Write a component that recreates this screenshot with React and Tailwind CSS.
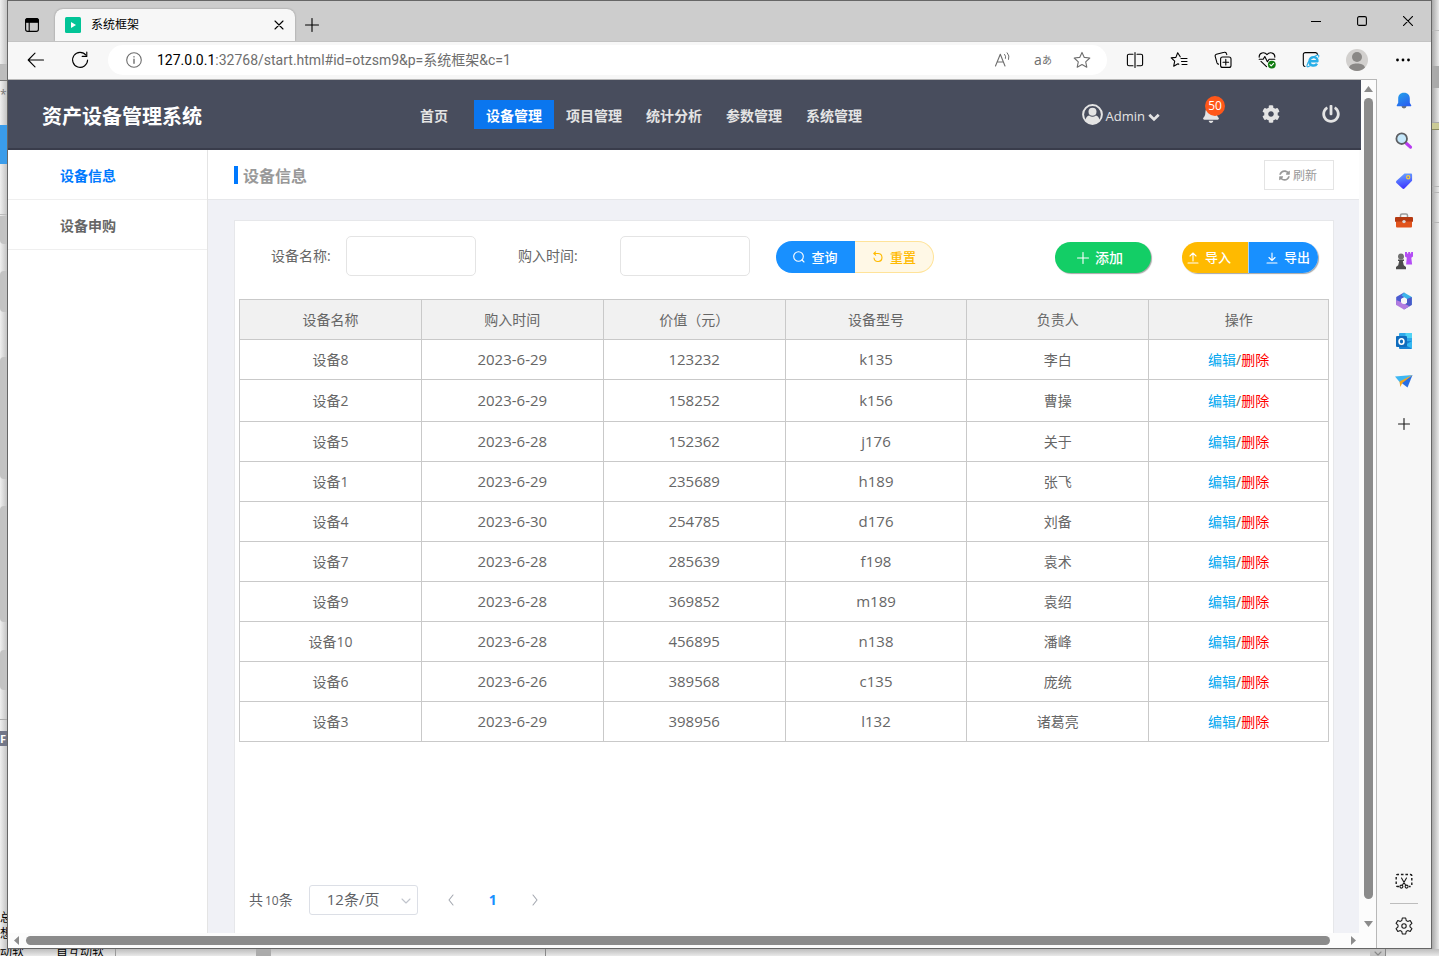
import React from "react";
import { FaBell, FaCog, FaPowerOff, FaSyncAlt } from "react-icons/fa";

const devices = [
  ["设备8", "2023-6-29", "123232", "k135", "李白"],
  ["设备2", "2023-6-29", "158252", "k156", "曹操"],
  ["设备5", "2023-6-28", "152362", "j176", "关于"],
  ["设备1", "2023-6-29", "235689", "h189", "张飞"],
  ["设备4", "2023-6-30", "254785", "d176", "刘备"],
  ["设备7", "2023-6-28", "285639", "f198", "袁术"],
  ["设备9", "2023-6-28", "369852", "m189", "袁绍"],
  ["设备10", "2023-6-28", "456895", "n138", "潘峰"],
  ["设备6", "2023-6-26", "389568", "c135", "庞统"],
  ["设备3", "2023-6-29", "398956", "l132", "诸葛亮"],
];

const columns = ["设备名称", "购入时间", "价值（元）", "设备型号", "负责人"];

function Svg({ size = 20, children, className = "" }) {
  return (
    <svg
      width={size}
      height={size}
      viewBox={`0 0 ${size} ${size}`}
      fill="none"
      stroke="currentColor"
      strokeWidth="1.1"
      strokeLinecap="round"
      strokeLinejoin="round"
      className={`shrink-0 ${className}`}
      aria-hidden="true"
    >
      {children}
    </svg>
  );
}

function IconButton({ label, className = "", children }) {
  return (
    <button type="button" aria-label={label} className={`flex shrink-0 items-center justify-center ${className}`}>
      {children}
    </button>
  );
}

function TabStrip() {
  return (
    <div className="flex h-10 bg-[#cdcdcd] text-black">
      <IconButton label="标签页操作" className="w-[47px] pt-2">
        <Svg size={16}>
          <rect x="1.6" y="1.6" width="12.8" height="12.8" rx="2.2" />
          <path d="M1.6 3.8A2.2 2.2 0 0 1 3.8 1.6h8.4a2.2 2.2 0 0 1 2.2 2.2v1.4H1.6z" fill="currentColor" />
          <path d="M5.2 5v9.4" />
        </Svg>
      </IconButton>
      <div className="mt-2 flex w-60 items-center rounded-t-lg bg-[#f7f7f7] pl-2.5 pr-2 shadow-[0_0_2px_rgba(0,0,0,0.35)]">
        <svg width="16" height="16" viewBox="0 0 16 16" className="shrink-0" aria-hidden="true">
          <rect width="16" height="16" rx="1.5" fill="#02c497" />
          <path d="M6 5l5 3-5 3z" fill="#fff" />
        </svg>
        <span className="ml-2.5 flex-1 text-xs">系统框架</span>
        <IconButton label="关闭标签页" className="size-4">
          <Svg size={10}><path d="M1 1l8 8M9 1l-8 8" /></Svg>
        </IconButton>
      </div>
      <IconButton label="新建标签页" className="w-[34px] pt-2">
        <Svg size={14}><path d="M7 .5v13M.5 7h13" /></Svg>
      </IconButton>
      <div className="flex-1" />
      <IconButton label="最小化" className="w-[46px]">
        <Svg size={10}><path d="M0 5.5h10" /></Svg>
      </IconButton>
      <IconButton label="最大化" className="w-[46px]">
        <Svg size={10}><rect x=".6" y=".6" width="8.8" height="8.8" rx="1.5" /></Svg>
      </IconButton>
      <IconButton label="关闭" className="w-[46px]">
        <Svg size={10}><path d="M0 0l10 10M10 0L0 10" /></Svg>
      </IconButton>
    </div>
  );
}

function AddressBar() {
  return (
    <div className="flex h-[38px] items-center border-t border-[#c3c3c3] bg-[#f7f7f7] pb-0.5 text-black">
      <IconButton label="后退" className="ml-1.5 w-11">
        <Svg size={18}><path d="M16.5 9H1.5M8 2.2L1.2 9 8 15.8" /></Svg>
      </IconButton>
      <IconButton label="刷新页面" className="w-11">
        <Svg size={18}>
          <path d="M15 4.2A7.5 7.5 0 1 0 16.6 9" />
          <path d="M15.8 1v4.4h-4.6" />
        </Svg>
      </IconButton>
      <div className="ml-1.5 flex h-[30px] flex-1 items-center rounded-full bg-white pl-[18px] pr-2 text-[#6e6e6e]">
        <Svg size={16}>
          <circle cx="8" cy="8" r="7.3" />
          <path d="M8 7.2v4M8 4.8v.1" strokeWidth="1.4" />
        </Svg>
        <input
          aria-label="地址栏"
          readOnly
          value="127.0.0.1:32768/start.html#id=otzsm9&p=系统框架&c=1"
          className="sr-only"
        />
        <span className="ml-[15px] flex-1 font-['Roboto','Noto_Sans_CJK_SC',sans-serif] text-sm" aria-hidden="true">
          <span className="text-black">127.0.0.1</span>:32768/start.html#id=otzsm9&amp;p=系统框架&amp;c=1
        </span>
        <div className="flex items-center">
          <IconButton label="大声朗读" className="w-10">
            <Svg size={18}>
              <path d="M1.5 15L6.3 3.2 11 15M3.2 11h6.2" />
              <path d="M10.6 3.4q1.6 1.7.9 4M13.2 1.8q2.8 3 1.4 6.6" strokeWidth="1" />
            </Svg>
          </IconButton>
          <IconButton label="翻译" className="w-10 items-baseline text-sm leading-5">
            a<span className="text-[10px]">あ</span>
          </IconButton>
          <IconButton label="收藏此页" className="ml-0.5 w-[34px]">
            <Svg size={18}>
              <path d="M9 1.4l2.3 5 5.5.6-4.1 3.8 1.1 5.4L9 13.5l-4.8 2.7 1.1-5.4L1.2 7l5.5-.6z" />
            </Svg>
          </IconButton>
        </div>
      </div>
      <div className="flex pl-1.5">
        <IconButton label="拆分屏幕" className="w-11">
          <Svg size={18}>
            <path d="M7 3.2H3a1.6 1.6 0 0 0-1.6 1.6v8.4A1.6 1.6 0 0 0 3 14.800h4M11 3.2h4a1.600 1.600 0 0 1 1.600 1.600v8.400a1.600 1.600 0 0 1-1.600 1.600h-4M9 1.500v15" />
          </Svg>
        </IconButton>
        <IconButton label="收藏夹" className="w-11">
          <Svg size={18}>
            <path d="M10.200 5.800L7.700 1.800 5.900 6.400l-4.700.5 3.500 3.300-1 5L8 12.800l.8.5M11 7.500h6M11.500 10.500h5.500M12 13.500h5" />
          </Svg>
        </IconButton>
        <IconButton label="集锦" className="w-11">
          <Svg size={18}>
            <path d="M12.800 3.600L12.400 2.500A1.700 1.700 0 0 0 10.300 1.300L2.400 3.200A1.700 1.700 0 0 0 1.200 5.300l1.800 6.600a1.700 1.700 0 0 0 1.500 1.200" />
            <rect x="6.600" y="6" width="10.400" height="10.400" rx="2" />
            <path d="M11.800 8.400v5.600M9 11.200h5.600" />
          </Svg>
        </IconButton>
        <IconButton label="浏览器概要" className="w-11">
          <Svg size={18}>
            <path d="M1.200 6.200C.8 1.500 6.500.4 9 3.600c2.500-3.200 8.200-2.100 7.800 2.600M1.200 8.300h4L6.800 5.500l2.600 5.300 1.700-2.500h5.700M3 10.300l5.500 5.400" />
            <circle cx="13.800" cy="13.600" r="3.900" fill="#107c10" stroke="none" />
            <path d="M12 13.700l1.200 1.200 2.400-2.600" stroke="#fff" />
          </Svg>
        </IconButton>
        <IconButton label="IE 模式" className="w-11">
          <Svg size={18}>
            <path d="M15.500 3.500A2 2 0 0 0 13.600 1.600H3.300a2 2 0 0 0-2 2v9.900a2 2 0 0 0 1.700 2" />
            <path d="M15 12.600c-1.600 3-7.500 2.700-7.500-2.200 0-5.600 8.300-5.700 8-.2H8" stroke="#28aee8" strokeWidth="2.400" strokeLinecap="butt" />
            <path d="M8 14.800c-5 3.500-3.300-2.700.8-6.600 4-3.800 9.300-6 7.800-2.200" stroke="#28aee8" />
          </Svg>
        </IconButton>
        <IconButton label="个人资料" className="w-12">
          <svg width="22" height="22" viewBox="0 0 22 22" aria-hidden="true">
            <circle cx="11" cy="11" r="11" fill="#d2d0ce" />
            <circle cx="11" cy="8" r="5" fill="#8a8886" />
            <path d="M3 18.500c1-5.500 15-5.500 16 0a11 11 0 0 1-16 0z" fill="#8a8886" />
          </svg>
        </IconButton>
        <IconButton label="设置及其他" className="mr-[6px] w-11">
          <Svg size={16}>
            <g fill="currentColor" stroke="none">
              <circle cx="2.500" cy="8" r="1.400" />
              <circle cx="8" cy="8" r="1.400" />
              <circle cx="13.500" cy="8" r="1.400" />
            </g>
          </Svg>
        </IconButton>
      </div>
    </div>
  );
}

function NavItem({ children, active }) {
  return (
    <a
      href="#nav"
      className={`w-20 pt-[5px] pb-[3px] text-center text-sm leading-[21px] font-bold ${active ? "bg-[#0a76ef] text-white" : "text-[#e4e4e4]"}`}
    >
      {children}
    </a>
  );
}

function AppHeader() {
  return (
    <header className="flex h-[70px] items-center border-b-2 border-[#393c4b] bg-[#484d5d] pr-5 pl-[34px] text-[#e4e4e4]">
      <h1 className="shrink-0 pt-[5px] text-xl font-bold text-white">资产设备管理系统</h1>
      <nav className="ml-48 flex shrink-0">
        <NavItem>首页</NavItem>
        <NavItem active>设备管理</NavItem>
        <NavItem>项目管理</NavItem>
        <NavItem>统计分析</NavItem>
        <NavItem>参数管理</NavItem>
        <NavItem>系统管理</NavItem>
      </nav>
      <div className="ml-auto flex shrink-0 items-center">
        <button type="button" className="flex items-center">
          <svg width="21" height="21" viewBox="0 0 21 21" aria-hidden="true">
            <circle cx="10.500" cy="10.500" r="9.400" fill="none" stroke="#e4e4e4" strokeWidth="2" />
            <circle cx="10.500" cy="7.800" r="4" fill="#e4e4e4" />
            <path d="M3.500 16.500c.3-3 1.700-4.700 3.600-5q3.400 2.600 6.800 0c1.900.3 3.300 2 3.600 5-3 4.500-11 4.500-14 0z" fill="#e4e4e4" />
          </svg>
          <span className="ml-[3px] pt-1.5 text-[13px]">Admin</span>
          <svg width="12" height="9" viewBox="0 0 12 9" className="mt-1.5 ml-[3px]" aria-hidden="true">
            <path d="M1.300 1.800L6 6.400l4.700-4.600" fill="none" stroke="#e4e4e4" strokeWidth="2.800" />
          </svg>
        </button>
        <IconButton label="通知" className="relative ml-[41px] size-5">
          <FaBell size={18} />
          <span className="absolute -top-2 left-1 flex size-5 items-center justify-center rounded-full bg-[#ff5719] text-xs text-white">
            50
          </span>
        </IconButton>
        <IconButton label="设置" className="ml-10 size-5"><FaCog size={18} /></IconButton>
        <IconButton label="退出" className="ml-10 size-5"><FaPowerOff size={18} /></IconButton>
      </div>
    </header>
  );
}

function SideMenu() {
  return (
    <aside className="w-[200px] shrink-0 border-r border-[#e4e4e4] bg-white text-sm font-bold">
      <a href="#info" className="flex h-[50px] items-center border-b border-[#efefef] pl-[52px] pt-0.5 text-[#0079fe]">设备信息</a>
      <a href="#apply" className="flex h-[50px] items-center border-b border-[#efefef] pl-[52px] pt-0.5 text-[#666]">设备申购</a>
    </aside>
  );
}

function Filters() {
  return (
    <form className="flex items-center pt-[15px] pr-[15px] pl-9 text-sm" onSubmit={(e) => e.preventDefault()}>
      <label htmlFor="device-name" className="w-[75px] shrink-0">设备名称:</label>
      <input id="device-name" className="h-10 w-[130px] rounded-[5px] border border-[#e4e4e4] bg-white px-2" />
      <label htmlFor="buy-date" className="ml-[42px] w-[102px] shrink-0">购入时间:</label>
      <input id="buy-date" className="h-10 w-[130px] rounded-[5px] border border-[#e4e4e4] bg-white px-2" />
      <div className="ml-[26px] flex h-8 shrink-0 pt-px text-[13px] font-medium">
        <button type="submit" className="flex h-8 w-[79px] items-center justify-center gap-1.5 rounded-l-full bg-[#1890ff] text-white">
          <Svg size={12}><circle cx="5.500" cy="5.500" r="4.800" /><path d="M9 9l2 2" /></Svg>
          查询
        </button>
        <button type="reset" className="flex h-8 w-[79px] items-center justify-center gap-1.5 rounded-r-full border border-l-0 border-[#ffe399] bg-[#fff8e6] text-[#ffba00]">
          <Svg size={12}><path d="M3.200 2.500h2.800a4 4 0 1 1-4 4.500M3.600.8L1.800 2.500l1.800 1.700" /></Svg>
          重置
        </button>
      </div>
      <button type="button" className="mt-[3px] ml-auto flex h-[31px] w-24 shrink-0 items-center justify-center gap-1.5 rounded-full bg-[#13ce66] pr-1.5 text-sm font-medium text-white shadow-[1px_1px_1px_rgba(0,0,0,0.35)]">
        <Svg size={12}><path d="M6 .5v11M.5 6h11" /></Svg>
        添加
      </button>
      <div className="mt-[3px] ml-[31px] flex shrink-0 rounded-full text-[13px] font-medium text-white shadow-[1px_1px_1px_rgba(0,0,0,0.35)]">
        <button type="button" className="flex h-[31px] w-[66px] items-center gap-1.5 rounded-l-full bg-[#ffba00] pl-[5px]">
          <Svg size={12}><path d="M1 11h10M6 9V1.200M3 4l3-3 3 3" /></Svg>
          导入
        </button>
        <button type="button" className="flex h-[31px] w-[70px] items-center justify-end gap-1.5 rounded-r-full border-l border-[#a3d3ff] bg-[#1890ff] pr-2">
          <Svg size={12}><path d="M1 11h10M6 1v7M3 5.500l3 3 3-3" /></Svg>
          导出
        </button>
      </div>
    </form>
  );
}

function DeviceTable() {
  return (
    <div className="px-1 pt-[23px]">
      <table className="w-full table-fixed border-collapse text-center text-[15px] [&_td]:border [&_td]:border-[#c9c9c9] [&_th]:border [&_th]:border-[#c9c9c9]">
        <thead>
          <tr className="h-10 bg-[#f1f1f1] text-sm">
            {columns.map((name) => <th key={name} className="w-[16.7%] font-normal">{name}</th>)}
            <th className="font-normal">操作</th>
          </tr>
        </thead>
        <tbody>
          {devices.map(([name, date, price, model, owner]) => (
            <tr key={name} className="h-10 nth-2:h-[42px]">
              <td className="text-sm">{name}</td>
              <td>{date}</td>
              <td>{price}</td>
              <td>{model}</td>
              <td className="text-sm">{owner}</td>
              <td className="text-sm">
                <a href="#edit" className="text-[#02a7f0]">编辑</a>/<a href="#delete" className="text-[#f00]">删除</a>
              </td>
            </tr>
          ))}
        </tbody>
      </table>
    </div>
  );
}

function Pagination() {
  return (
    <div className="mt-auto mb-[18px] flex items-center pl-3.5 text-sm text-[#606266]">
      <span>共<span className="ml-0.5 text-xs">10</span>条</span>
      <div className="relative ml-4">
        <select
          aria-label="每页条数"
          className="h-[30px] w-[109px] appearance-none rounded-[3px] border border-[#dcdfe6] bg-white pl-[17px] text-[15px]"
        >
          <option>12条/页</option>
        </select>
        <Svg size={10} className="pointer-events-none absolute top-[11px] right-[7px] text-[#c0c4cc]">
          <path d="M1 3l4 4 4-4" />
        </Svg>
      </div>
      <IconButton label="上一页" className="ml-[23px] w-5 text-[#a4a8b0]">
        <Svg size={12}><path d="M8 1L4 6l4 5" /></Svg>
      </IconButton>
      <button type="button" className="mx-6 w-4 font-bold text-[#1890ff]">1</button>
      <IconButton label="下一页" className="w-5 text-[#a4a8b0]">
        <Svg size={12}><path d="M4 1l4 5-4 5" /></Svg>
      </IconButton>
    </div>
  );
}

function Content() {
  return (
    <main className="mr-0.5 flex min-w-0 flex-1 flex-col bg-[#f0f1f6] text-[#666]">
      <div className="flex h-[50px] shrink-0 items-center border-b border-[#e6e7ea] bg-white pr-[25px] pl-[26px]">
        <span className="h-[18px] w-1 bg-[#0079fe]" />
        <h2 className="ml-[5px] pt-0.5 text-base font-bold text-[#999]">设备信息</h2>
        <button type="button" className="ml-auto flex h-[30px] w-[70px] items-center justify-center gap-[3px] border border-[#e4e4e4] pt-0.5 pr-0.5 text-xs text-[#999]">
          <FaSyncAlt size={11} />
          刷新
        </button>
      </div>
      <section className="mt-5 mr-[25px] ml-[26px] flex flex-1 flex-col border border-b-0 border-[#e6e7ea] bg-white">
        <Filters />
        <DeviceTable />
        <Pagination />
      </section>
    </main>
  );
}

function VerticalScroll() {
  return (
    <div className="flex w-[15px] shrink-0 flex-col items-center bg-[#fcfcfc] py-1.5" aria-hidden="true">
      <svg width="9" height="6" viewBox="0 0 9 6"><path d="M4.500 0L9 6H0z" fill="#8b8b8b" /></svg>
      <div className="mt-1.5 mb-[22px] w-[9px] flex-1 rounded-full bg-[#8b8b8b]" />
      <svg width="9" height="6" viewBox="0 0 9 6"><path d="M4.500 6L9 0H0z" fill="#8b8b8b" /></svg>
    </div>
  );
}

function HorizontalScroll() {
  return (
    <div className="flex h-[15px] shrink-0 items-center bg-[#fcfcfc] pr-5 pl-1.5" aria-hidden="true">
      <svg width="6" height="9" viewBox="0 0 6 9"><path d="M0 4.500L5 0v9z" fill="#8b8b8b" /></svg>
      <div className="mr-5 ml-1.5 h-[9px] flex-1 rounded-full bg-[#8b8b8b]" />
      <svg width="6" height="9" viewBox="0 0 6 9"><path d="M6 4.500L1 0v9z" fill="#8b8b8b" /></svg>
    </div>
  );
}

function EdgeSidebar() {
  return (
    <div className="flex w-[54px] shrink-0 flex-col items-center bg-[#f7f7f7] text-[#1b1b1b]">
      <div className="flex flex-col pt-0.5">
        <IconButton label="通知" className="h-10 w-12">
          <svg width="18" height="18" viewBox="0 0 18 18" aria-hidden="true">
            <path d="M6.500 14h5a2.500 2.500 0 0 1-5 0z" fill="#6d7278" />
            <path d="M9 .8c-4 0-5.800 2.700-5.800 5.700v4.200L1.800 13.200c-.3.700 0 1.100.7 1.100h13c.7 0 1-.4.7-1.100l-1.400-2.500V6.500c0-3-1.800-5.700-5.800-5.700z" fill="url(#bell)" />
            <defs><linearGradient id="bell" x1="0" y1="0" x2=".6" y2="1"><stop stopColor="#22a3ea" /><stop offset="1" stopColor="#2a62f0" /></linearGradient></defs>
          </svg>
        </IconButton>
        <IconButton label="搜索" className="h-10 w-12">
          <svg width="18" height="18" viewBox="0 0 18 18" aria-hidden="true">
            <path d="M11.500 11.500l4 3.600" stroke="#b83bf0" strokeWidth="3.200" strokeLinecap="round" />
            <circle cx="6.700" cy="6.700" r="5.300" fill="#c5e8fb" stroke="#5d5f63" strokeWidth="1.800" />
          </svg>
        </IconButton>
        <IconButton label="购物" className="h-10 w-12">
          <svg width="18" height="18" viewBox="0 0 18 18" aria-hidden="true">
            <path d="M9.500 1.500h6.300c.8 0 1.300.5 1.300 1.300v6L9.700 16.300a1.800 1.800 0 0 1-2.500 0L1.500 11a1.600 1.600 0 0 1 0-2.300z" fill="url(#tag)" />
            <circle cx="13.200" cy="5.300" r="1.600" fill="#6b74d8" stroke="#f6cf3a" strokeWidth="1.200" />
            <defs><linearGradient id="tag" x1=".3" y1="0" x2=".5" y2="1"><stop stopColor="#69a4ff" /><stop offset="1" stopColor="#3b33ff" /></linearGradient></defs>
          </svg>
        </IconButton>
        <IconButton label="工具" className="h-10 w-12">
          <svg width="18" height="18" viewBox="0 0 18 18" aria-hidden="true">
            <path d="M5.500 5.500V3.600C5.500 2.500 6 2 7 2h4c1 0 1.500.5 1.500 1.600v1.900" fill="none" stroke="#9a9a9a" strokeWidth="1.500" />
            <rect y="5" width="18" height="5" rx="1" fill="#b53a12" />
            <path d="M1 9.500h16v5a1 1 0 0 1-1 1H2a1 1 0 0 1-1-1z" fill="#e1531c" />
            <circle cx="9" cy="9.600" r="1.700" fill="#d9d9d9" />
          </svg>
        </IconButton>
        <IconButton label="游戏" className="h-10 w-12">
          <svg width="18" height="18" viewBox="0 0 18 18" aria-hidden="true">
            <path d="M10 0h2v1.500h1.200V0h1.900v1.500h1V0H18v4.500l-1.700 1.200.8 6.800h-6l.7-6.800L10 4.500z" fill="#b44df5" />
            <circle cx="6" cy="4.600" r="3" fill="#707070" />
            <path d="M3 7.500h6v1.600H7.800l1 4.200 2.200 1.700v2.300H1V15l2.200-1.700 1-4.200H3z" fill="#4c4c4c" />
          </svg>
        </IconButton>
        <IconButton label="Microsoft 365" className="h-10 w-12">
          <svg width="18" height="18" viewBox="0 0 18 18" aria-hidden="true">
            <path d="M9 .5L1.200 5v8L6 10.500V7l6-3.500z" fill="#4b5bd0" />
            <path d="M9 .5l7.800 4.500v8L12 10.300V7L6.500 3.500z" fill="#3db4ea" />
            <path d="M16.800 5v8L9 17.500l-3-3.200 6-3.500V7z" fill="#4a58c8" />
            <path d="M1.200 8v5L9 17.500l5.500-3.200L6 10z" fill="#b27be0" />
            <circle cx="9" cy="9" r="3" fill="#f7f7f7" />
          </svg>
        </IconButton>
        <IconButton label="Outlook" className="h-10 w-12">
          <svg width="18" height="18" viewBox="0 0 18 18" aria-hidden="true">
            <rect x="4" y="1" width="13" height="9" rx="1" fill="#2fa9ea" />
            <rect x="10.500" y="1" width="6.500" height="5" fill="#50d3f5" />
            <path d="M4 9h13v7a1 1 0 0 1-1 1H5a1 1 0 0 1-1-1z" fill="#1682d4" />
            <path d="M17 9v7.500L10 13z" fill="#35b8f1" />
            <rect x="1" y="4" width="11" height="11" rx="1" fill="#0f6cbd" />
            <ellipse cx="6.500" cy="9.500" rx="2.400" ry="2.800" fill="none" stroke="#fff" strokeWidth="1.600" />
          </svg>
        </IconButton>
        <IconButton label="Drop" className="h-10 w-12">
          <svg width="18" height="18" viewBox="0 0 18 18" aria-hidden="true">
            <path d="M0 4.500L17.500 3 5 10.500z" fill="#3eb7f3" />
            <path d="M17.500 3L12.500 15.500 6 10.500z" fill="#286fe5" />
            <path d="M17.500 3L4.500 9.500l.8 5.500 2-4z" fill="#f5a61d" />
          </svg>
        </IconButton>
        <IconButton label="自定义" className="mt-[3px] h-10 w-12">
          <Svg size={12}><path d="M6 .5v11M.5 6h11" /></Svg>
        </IconButton>
      </div>
      <div className="mt-auto flex flex-col items-center pb-1.5">
        <IconButton label="屏幕截图" className="h-8 w-12">
          <Svg size={18}>
            <path d="M4 14.500H2.500A1.300 1.300 0 0 1 1.200 13.200V3.800A1.300 1.300 0 0 1 2.500 2.500h13a1.300 1.300 0 0 1 1.300 1.300v9.400a1.300 1.300 0 0 1-1.300 1.300H14" strokeDasharray="2.600 1.900" strokeWidth="1.400" strokeLinecap="butt" />
            <path d="M6.500 6l4.300 7.500M11.500 6l-4.300 7.500" />
            <circle cx="6.400" cy="14.600" r="1.500" />
            <circle cx="11.600" cy="14.600" r="1.500" />
          </Svg>
        </IconButton>
        <div className="mt-1.5 mb-1.5 h-px w-7 bg-[#bdbdbd]" />
        <IconButton label="侧边栏设置" className="h-8 w-12">
          <Svg size={18}>
            <path d="M7.300 1h3.400l.5 2.500 1.500.9 2.500-.9 1.700 2.900L15 8.200v1.600l1.900 1.800-1.700 2.900-2.500-.9-1.500.9-.5 2.500H7.300l-.5-2.500-1.500-.9-2.500.9-1.700-2.900L3 9.800V8.200L1.100 6.400l1.700-2.900 2.500.9 1.500-.9z" />
            <circle cx="9" cy="9" r="2.200" />
          </Svg>
        </IconButton>
      </div>
    </div>
  );
}

function LeftBackdrop() {
  return (
    <div className="flex w-[7px] shrink-0 flex-col overflow-hidden bg-linear-to-r from-[#efefef] to-[#c4c4c4] text-xs text-black [&>*]:shrink-0">
      <div className="h-[65px] border-b border-[#bbb]" />
      <div className="h-4 border-b border-[#777] bg-[#bdbdbd]" />
      <div className="h-[44px] pt-1.5 leading-4 text-[#777]">*.</div>
      <div className="h-[39px] bg-[#3a9cea]" />
      <div className="h-[51px] border-b border-[#bbb]" />
      <div className="mt-px h-7 rounded-bl-sm bg-[#c3c3c3]" />
      <div className="mt-[27px] h-[41px] rounded-l-sm bg-[#c3c3c3]" />
      <div className="mt-[45px] h-[122px] rounded-l-sm bg-[#c3c3c3]" />
      <div className="mt-[27px] h-[116px] rounded-l-sm bg-[#c3c3c3]" />
      <div className="mt-7 h-10 rounded-l-sm bg-[#c3c3c3]" />
      <div className="mt-[29px] h-3 border-t border-[#aaa]" />
      <div className="h-[15px] bg-[#737788] text-[11px] leading-[15px] font-bold text-white">F</div>
      <div className="mt-auto mb-[7px] leading-4 whitespace-nowrap">
        <div>总</div>
        <div>想</div>
      </div>
    </div>
  );
}

function BottomBackdrop() {
  return (
    <div className="flex h-[7px] shrink-0 overflow-hidden bg-linear-to-b from-[#bdbdbd] to-[#e9e9e9] text-xs leading-[6px] text-black">
      <span className="w-14 shrink-0">动软</span>
      <span className="w-[59px] shrink-0">首互动软</span>
      <span className="w-[141px] shrink-0 border-l border-[#999]" />
      <span className="w-[15px] shrink-0 bg-[#ababab]" />
      <span className="w-[274px] shrink-0" />
      <span className="flex-1 border-l border-[#888]" />
      <span className="mr-[53px] flex w-4 justify-center border-r border-[#888] bg-[#c4c4c4] pt-0.5 text-[#888]">
        <Svg size={8}><path d="M1 1l3 3 3-3" /></Svg>
      </span>
    </div>
  );
}

function RightBackdrop() {
  return (
    <div className="w-[7px] shrink-0 bg-linear-to-r from-[#a9a9a9] to-[#e9e9e9]">
      <div className="h-[30px]" />
      <div className="h-9 border-t border-[#bbb]" />
      <div className="h-[22px] bg-[#aaa]" />
      <div className="h-[35px] border-b border-[#aaa]" />
      <div className="h-[7px] border-b border-[#8b8b60] bg-[#cbcb96]" />
      <div className="h-[57px] border-b border-[#b5b5b5]" />
      <div className="h-[6px] border-b border-[#b5b5b5]" />
      <div className="h-[30px] border-b border-[#b5b5b5]" />
    </div>
  );
}

export default function App() {
  return (
    <div className="flex min-h-screen flex-col bg-[#e6e6e6] font-['Open_Sans','Noto_Sans_CJK_SC',sans-serif]">
      <div className="flex flex-1">
        <LeftBackdrop />
        <div className="flex min-w-0 flex-1 flex-col border border-[#666]">
          <TabStrip />
          <AddressBar />
          <div className="flex flex-1">
            <div className="flex min-w-0 flex-1 flex-col border-t border-r border-[#b8b8b8]">
              <div className="flex flex-1">
                <div className="flex min-w-0 flex-1 flex-col bg-[#fcfcfc]">
                  <AppHeader />
                  <div className="flex flex-1">
                    <SideMenu />
                    <Content />
                  </div>
                </div>
                <VerticalScroll />
              </div>
              <HorizontalScroll />
            </div>
            <EdgeSidebar />
          </div>
        </div>
        <RightBackdrop />
      </div>
      <BottomBackdrop />
    </div>
  );
}
